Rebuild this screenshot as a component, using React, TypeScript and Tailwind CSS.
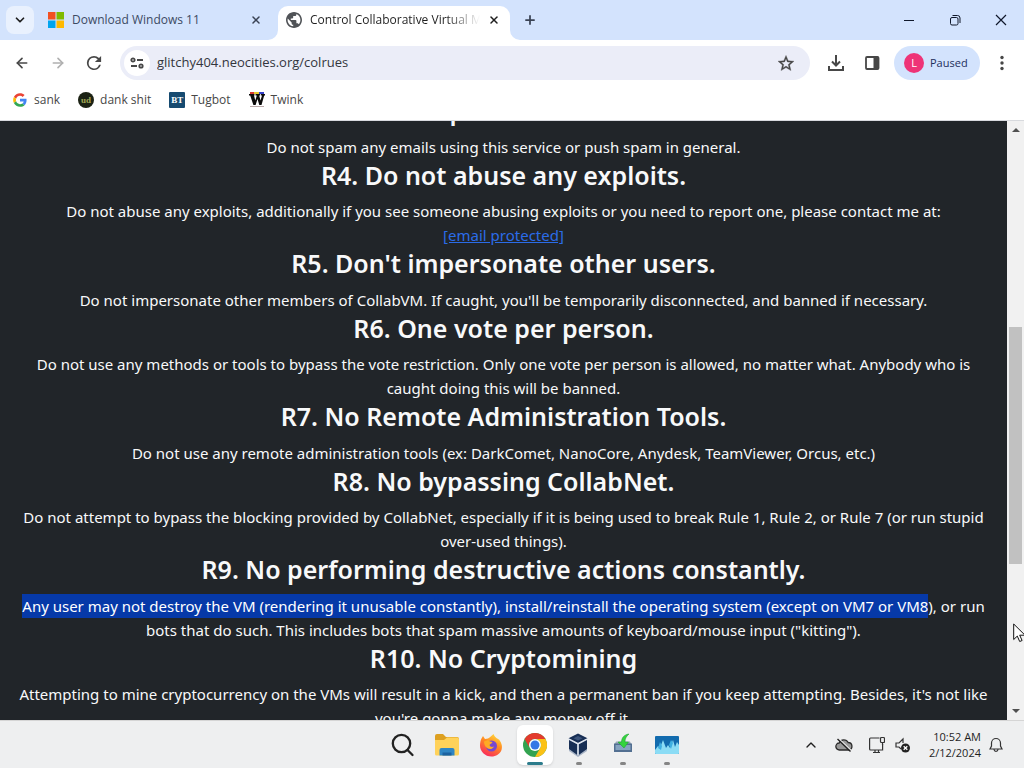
import { ArrowLeft, ArrowRight, Plus, X, ChevronDown, ChevronUp } from "lucide-react";
import type { ReactNode } from "react";

type Rule = { title: string; body: ReactNode };

const rules: Rule[] = [
  { title: "R3. Spam & emails", body: "Do not spam any emails using this service or push spam in general." },
  {
    title: "R4. Do not abuse any exploits.",
    body: (
      <>
        Do not abuse any exploits, additionally if you see someone abusing exploits or you need to report one, please contact me at:
        <br />
        <a href="#email" className="text-[#2b6ce8] underline">[email protected]</a>
      </>
    ),
  },
  {
    title: "R5. Don't impersonate other users.",
    body: "Do not impersonate other members of CollabVM. If caught, you'll be temporarily disconnected, and banned if necessary.",
  },
  {
    title: "R6. One vote per person.",
    body: (
      <>
        Do not use any methods or tools to bypass the vote restriction. Only one vote per person is allowed, no matter what. Anybody who is
        <br />
        caught doing this will be banned.
      </>
    ),
  },
  {
    title: "R7. No Remote Administration Tools.",
    body: "Do not use any remote administration tools (ex: DarkComet, NanoCore, Anydesk, TeamViewer, Orcus, etc.)",
  },
  {
    title: "R8. No bypassing CollabNet.",
    body: (
      <>
        Do not attempt to bypass the blocking provided by CollabNet, especially if it is being used to break Rule 1, Rule 2, or Rule 7 (or run stupid
        <br />
        over-used things).
      </>
    ),
  },
  {
    title: "R9. No performing destructive actions constantly.",
    body: (
      <>
        <mark className="inline-block bg-[#0639a8] text-white">
          Any user may not destroy the VM (rendering it unusable constantly), install/reinstall the operating system (except on VM7 or VM8
        </mark>
        ), or run
        <br />
        bots that do such. This includes bots that spam massive amounts of keyboard/mouse input ("kitting").
      </>
    ),
  },
  {
    title: "R10. No Cryptomining",
    body: (
      <>
        Attempting to mine cryptocurrency on the VMs will result in a kick, and then a permanent ban if you keep attempting. Besides, it's not like
        <br />
        you're gonna make any money off it.
      </>
    ),
  },
];

function MicrosoftLogo() {
  return (
    <svg className="size-4 shrink-0" viewBox="0 0 16 16" aria-hidden="true">
      <path fill="#f25022" d="M0 0h7.5v7.5H0z" />
      <path fill="#7fba00" d="M8.5 0H16v7.5H8.5z" />
      <path fill="#00a4ef" d="M0 8.500h7.500V16H0z" />
      <path fill="#ffb900" d="M8.500 8.500H16V16H8.500z" />
    </svg>
  );
}

function Globe() {
  return (
    <svg className="size-4 shrink-0" viewBox="2 2 20 20" aria-hidden="true">
      <path
        fill="#505357"
        d="M12 2C6.480 2 2 6.480 2 12s4.480 10 10 10 10-4.480 10-10S17.520 2 12 2zm-1 17.930c-3.950-.49-7-3.850-7-7.930 0-.62.08-1.210.21-1.790L9 15v1c0 1.100.9 2 2 2v1.930zm6.900-2.540c-.26-.81-1-1.390-1.900-1.390h-1v-3c0-.55-.45-1-1-1H8v-2h2c.55 0 1-.45 1-1V7h2c1.100 0 2-.9 2-2v-.41c2.930 1.190 5 4.060 5 7.410 0 2.080-.8 3.970-2.100 5.390z"
      />
    </svg>
  );
}

function TabStrip() {
  return (
    <header className="flex h-10 shrink-0 items-stretch bg-[#d3e3fd]">
      <button aria-label="Search tabs" className="ml-1.5 mt-1.5 grid size-7 place-items-center rounded-lg bg-[#e9f1fe]">
        <ChevronDown className="size-3.5 text-[#1f1f1f]" strokeWidth={3} />
      </button>
      <div className="flex w-[244px] items-center pr-4">
        <div className="flex grow items-center gap-2 pl-3.5">
          <MicrosoftLogo />
          <span className="text-[12px] text-[#3c4a63]">Download Windows 11</span>
        </div>
        <button aria-label="Close tab" className="text-[#3a4354]">
          <X className="size-3" strokeWidth={3} />
        </button>
      </div>
      <div className="relative mt-1.5 flex w-[232px] items-center gap-2 rounded-t-[10px] bg-white pb-1.5 pl-2 pr-2.5">
        <svg className="absolute -left-2.5 bottom-0 size-2.5" viewBox="0 0 10 10" aria-hidden="true">
          <path fill="#fff" d="M10 0v10H0A10 10 0 0 0 10 0z" />
        </svg>
        <svg className="absolute -right-2.5 bottom-0 size-2.5" viewBox="0 0 10 10" aria-hidden="true">
          <path fill="#fff" d="M0 0v10h10A10 10 0 0 1 0 0z" />
        </svg>
        <Globe />
        <span className="min-w-0 grow overflow-hidden whitespace-nowrap bg-linear-to-r from-[#1f1f1f] from-80% to-transparent bg-clip-text text-[12px] text-transparent">
          Control Collaborative Virtual Machines
        </span>
        <button aria-label="Close tab" className="text-[#1f1f1f]">
          <X className="size-3" strokeWidth={3} />
        </button>
      </div>
      <button aria-label="New tab" className="ml-3 grid w-4 place-items-center text-[#3a4354]">
        <Plus className="size-3.5" strokeWidth={3} />
      </button>
      <div className="ml-auto flex items-center text-[#10182b]">
        <button aria-label="Minimize" className="grid w-[46px] place-items-center">
          <svg className="size-3" viewBox="0 0 12 12" fill="none" stroke="currentColor" aria-hidden="true">
            <path d="M1 6.500h10" />
          </svg>
        </button>
        <button aria-label="Restore" className="grid w-[46px] place-items-center">
          <svg className="size-3" viewBox="0 0 12 12" fill="none" stroke="currentColor" aria-hidden="true">
            <rect x="1.500" y="3.500" width="7.500" height="7.500" rx="1.500" />
            <path d="M3.500 1.500H8.500a2.500 2.500 0 0 1 2.500 2.500v5" />
          </svg>
        </button>
        <button aria-label="Close" className="grid w-[46px] place-items-center">
          <svg className="size-3" viewBox="0 0 12 12" fill="none" stroke="currentColor" strokeWidth="1.200" aria-hidden="true">
            <path d="M1 1l10 10M11 1L1 11" />
          </svg>
        </button>
      </div>
    </header>
  );
}

function Toolbar() {
  return (
    <div className="flex h-[46px] shrink-0 items-center bg-white pl-3.5 pr-3.5 text-[#474747]">
      <button aria-label="Back">
        <ArrowLeft className="size-4" strokeWidth={2.5} />
      </button>
      <button aria-label="Forward" className="ml-5 text-[#b0b0b0]">
        <ArrowRight className="size-4" strokeWidth={2.5} />
      </button>
      <button aria-label="Reload" className="ml-5">
        <svg className="size-4" viewBox="3 3 18 18" aria-hidden="true">
          <path
            fill="currentColor"
            d="M17.650 6.350A7.960 7.960 0 0 0 12 4a8 8 0 1 0 7.730 10h-2.080A6 6 0 1 1 12 6c1.660 0 3.140.69 4.220 1.780L13 11h7V4z"
          />
        </svg>
      </button>
      <div className="ml-[18px] flex h-[34px] grow items-center rounded-full bg-[#ebedf8] pl-1 pr-4">
        <button aria-label="View site information" className="grid size-[26px] place-items-center rounded-full bg-white">
          <svg className="size-3.5" viewBox="0 0 14 14" fill="none" stroke="currentColor" strokeWidth="1.800" aria-hidden="true">
            <circle cx="3" cy="4" r="1.700" />
            <path d="M7 4h6M1 10h6" />
            <circle cx="11" cy="10" r="1.700" />
          </svg>
        </button>
        <input
          aria-label="Address"
          defaultValue="glitchy404.neocities.org/colrues"
          className="ml-[7px] min-w-0 grow bg-transparent text-[13px] text-[#33363d] outline-none"
        />
        <button aria-label="Bookmark this tab">
          <svg className="size-4" viewBox="2 2 20 19" aria-hidden="true">
            <path
              fill="currentColor"
              stroke="currentColor"
              strokeWidth=".4"
              d="M22 9.240l-7.190-.62L12 2 9.190 8.630 2 9.240l5.460 4.730L5.820 21 12 17.270 18.180 21l-1.630-7.030L22 9.240zM12 15.400l-3.760 2.270 1-4.280-3.320-2.880 4.380-.38L12 6.100l1.710 4.040 4.380.38-3.320 2.880 1 4.280L12 15.400z"
            />
          </svg>
        </button>
      </div>
      <button aria-label="Downloads" className="ml-[18px]">
        <svg className="size-4" viewBox="0 0 16 16" fill="none" stroke="currentColor" strokeWidth="2" aria-hidden="true">
          <path d="M8 0v10M4 6.500l4 4 4-4M1 11v4h14v-4" />
        </svg>
      </button>
      <button aria-label="Side panel" className="ml-5">
        <svg className="size-4" viewBox="0 0 16 16" aria-hidden="true">
          <rect x="2" y="2" width="12.500" height="12" rx="1" fill="none" stroke="currentColor" strokeWidth="1.800" />
          <path fill="currentColor" d="M9.500 1.500H14V14H9.500z" />
        </svg>
      </button>
      <button className="ml-3.5 flex h-[34px] w-[86px] items-center gap-1.5 rounded-full bg-[#d3e3fd] pl-2.5 text-[11px] text-[#1d2f5c]">
        <span className="grid size-5 place-items-center rounded-full bg-[#ee3377] text-[11px] text-white">L</span>
        Paused
      </button>
      <button aria-label="Menu" className="ml-3.5">
        <svg className="size-4" viewBox="0 0 16 16" fill="currentColor" aria-hidden="true">
          <circle cx="8" cy="2.500" r="1.700" />
          <circle cx="8" cy="8" r="1.700" />
          <circle cx="8" cy="13.500" r="1.700" />
        </svg>
      </button>
    </div>
  );
}

function BookmarkBar() {
  return (
    <nav className="flex h-[35px] shrink-0 items-start gap-[18px] border-b border-[#d8dade] bg-white pl-3 pt-1 text-[12px] leading-5 text-[#474747]">
      <a href="#sank" className="flex items-center gap-1.5">
        <svg className="size-4" viewBox="-4 -4 56 56" aria-hidden="true">
          <path fill="#EA4335" d="M24 9.500c3.540 0 6.710 1.220 9.210 3.600l6.850-6.850C35.900 2.380 30.470 0 24 0 14.620 0 6.510 5.380 2.560 13.220l7.980 6.190C12.430 13.720 17.740 9.500 24 9.500z" />
          <path fill="#4285F4" d="M46.980 24.550c0-1.570-.15-3.090-.38-4.550H24v9.020h12.940c-.58 2.960-2.260 5.480-4.780 7.180l7.730 6c4.510-4.180 7.090-10.360 7.090-17.650z" />
          <path fill="#FBBC05" d="M10.530 28.590A14.500 14.500 0 0 1 9.770 24c0-1.600.27-3.140.76-4.590l-7.980-6.190A23.900 23.900 0 0 0 0 24c0 3.880.92 7.540 2.560 10.780l7.970-6.190z" />
          <path fill="#34A853" d="M24 48c6.480 0 11.930-2.130 15.890-5.810l-7.730-6c-2.150 1.450-4.920 2.300-8.160 2.300-6.260 0-11.570-4.220-13.470-9.910l-7.980 6.190C6.510 42.620 14.620 48 24 48z" />
        </svg>
        sank
      </a>
      <a href="#dank" className="flex items-center gap-1.5">
        <span className="grid size-4 place-items-center rounded-full bg-[#1b2214] font-['Liberation_Serif',serif] text-[9px] font-bold leading-none text-[#a3a856]">ud</span>
        dank shit
      </a>
      <a href="#tugbot" className="flex items-center gap-1.5">
        <span className="grid size-4 place-items-center rounded-[1px] bg-[#164a70] font-['Liberation_Serif',serif] text-[9px] font-bold leading-none text-white">BT</span>
        Tugbot
      </a>
      <a href="#twink" className="flex items-center gap-1.5">
        <svg className="size-4" viewBox="0 0 16 16" aria-hidden="true">
          <path fill="#d6372f" d="M1 0h4v2H1z" />
          <path fill="#e8c82e" d="M5 0h5v2H5z" />
          <path fill="#3440c8" d="M10 0h5v2h-5z" />
          <path fill="#0b0b0b" d="M0 2h5.500v1.500H5L6.300 8.500 7.800 3.500H6.500V2H11v1.500h-.8L11.500 8.500 13 3.500h-1.200V2H16v1.500h-.8L12.500 13h-2.200L8.500 7 6.600 13H4.400L1.200 3.500H0z" />
          <path stroke="#b9a9a9" d="M1 14.500h14" />
        </svg>
        Twink
      </a>
    </nav>
  );
}

function Page() {
  return (
    <div className="flex min-h-0 grow bg-[#212529] font-['Noto_Sans','Open_Sans',sans-serif]">
      <main className="min-w-0 grow overflow-hidden text-center text-[#f8f9fa]">
        <div className="-mt-[27px] whitespace-nowrap">
          {rules.map((rule) => (
            <section key={rule.title}>
              <h3 className="mb-2 text-[25px] font-semibold leading-[1.3]">{rule.title}</h3>
              <div className="flex justify-center text-[15px] leading-6">
                <p>{rule.body}</p>
              </div>
            </section>
          ))}
        </div>
      </main>
      <div className="relative flex w-[17px] shrink-0 flex-col items-center bg-[#f1f1f1] py-[7px]">
        <svg className="h-1 w-2" viewBox="0 0 8 4" aria-hidden="true">
          <path fill="#505050" d="M0 4l4-4 4 4z" />
        </svg>
        <div className="flex w-[13px] grow flex-col">
          <div className="grow-[195]" />
          <div className="grow-[237] bg-[#c1c1c1]" />
          <div className="grow-[145]" />
        </div>
        <svg className="h-1 w-2" viewBox="0 0 8 4" aria-hidden="true">
          <path fill="#505050" d="M0 0l4 4 4-4z" />
        </svg>
        <svg className="absolute left-1.5 top-[502px] h-5 w-3" viewBox="0 0 12 20" aria-hidden="true">
          <path fill="#fff" stroke="#111" d="M.7 1v15.500l3.600-3.400 2.400 5.400 2.400-1-2.400-5.300H12z" />
        </svg>
      </div>
    </div>
  );
}

function TaskItem({ label, children, state }: { label: string; children: ReactNode; state?: "active" | "open" }) {
  return (
    <button
      aria-label={label}
      className={
        state === "active"
          ? "relative grid h-10 w-9 place-items-center rounded-md bg-white shadow-sm"
          : "relative grid h-10 w-9 place-items-center"
      }
    >
      {children}
      {state === "active" && <span className="absolute bottom-0 left-2.5 h-[3px] w-4 rounded-full bg-[#2c7c8c]" />}
      {state === "open" && <span className="absolute bottom-0 left-[15px] h-[3px] w-1.5 rounded-full bg-[#858585]" />}
    </button>
  );
}

function Taskbar() {
  return (
    <footer className="relative flex h-12 shrink-0 items-center justify-end border-t border-[#d5d5d5] bg-[#eeeff0] text-[#1f1f1f]">
      <div className="absolute inset-y-0 left-[385px] flex items-center gap-2">
        <TaskItem label="Search">
          <svg className="size-6" viewBox="0 0 24 24" fill="none" stroke="#222" strokeWidth="2.300" aria-hidden="true">
            <circle cx="10.500" cy="10.500" r="8.700" />
            <path strokeLinecap="round" d="M16.500 17l5 5" />
          </svg>
        </TaskItem>
        <TaskItem label="File Explorer">
          <svg className="size-6" viewBox="0 0 24 24" aria-hidden="true">
            <path fill="#dda021" d="M0 3q0-2 2-2h6l3 3h11q2 0 2 2v7H0z" />
            <path fill="#ffd25a" d="M0 7h9l3-2.500h10q2 0 2 2V21q0 1.500-1.500 1.500h-21Q0 22.500 0 21z" />
            <path fill="#2f86c4" d="M4.500 22.500V17q0-2 2-2h11q2 0 2 2v5.500z" />
            <path fill="#1c62a0" d="M7.500 19.500h9v3h-9z" />
          </svg>
        </TaskItem>
        <TaskItem label="Firefox">
          <svg className="size-6" viewBox="0 0 24 24" aria-hidden="true">
            <defs>
              <linearGradient id="fox" x1=".8" y1="0" x2=".3" y2="1">
                <stop offset="0" stopColor="#ffe13f" />
                <stop offset=".45" stopColor="#ff8a22" />
                <stop offset="1" stopColor="#f9285f" />
              </linearGradient>
            </defs>
            <path fill="url(#fox)" d="M2.500 5.500L4 3l2 3 3-.5C12 4 13 2 14.500 1c.5 2 2 3 3.500 4.500 1 .5 2 1 2 1 3 4 3.500 7 2.500 10.500C21 21 17 23.500 12.500 23.500 6 23.500 1 18.500 1 12.500 1 10 1.500 7.500 2.500 5.500z" />
            <circle cx="12.500" cy="13" r="5.500" fill="#7747cf" />
            <path fill="#ffab24" d="M5 8.500l4-1.500 2 1.500 2.500.5c-.5 1.500-2.500 2-3 3 .5 2 2.500 2.500 4.500 1.500-1 2.500-4.500 3.500-7 1.500-2-1.500-3-4-3-6.500z" />
          </svg>
        </TaskItem>
        <TaskItem label="Chrome" state="active">
          <svg className="size-6" viewBox="0 0 24 24" aria-hidden="true">
            <circle cx="12" cy="12" r="12" fill="#33a350" />
            <path fill="#e33b2e" d="M1.600 6A12 12 0 0 1 22.400 6H12a6 6 0 0 0-5.200 9z" />
            <path fill="#fbc116" d="M22.400 6A12 12 0 0 1 12 24l5.200-9A6 6 0 0 0 12 6z" />
            <circle cx="12" cy="12" r="6" fill="#fff" />
            <circle cx="12" cy="12" r="4.500" fill="#3478e5" />
          </svg>
        </TaskItem>
        <TaskItem label="VirtualBox" state="open">
          <svg className="size-6" viewBox="0 0 24 24" aria-hidden="true">
            <path fill="#a7b3c5" d="M2 6l9 4 9-4v12l-9 6-9-6z" />
            <path fill="#182f55" d="M11 .5l9.500 4.800L11 10 1.500 5.300z" />
            <path fill="#3c547c" d="M11 3l4.500 2.300L11 7.600 6.500 5.300z" />
            <path fill="#182f55" d="M2 7l8.300 4.300V22L2 16zM20 7l-8.300 4.300V22L20 16z" />
            <path fill="#dfe6f0" d="M1.500 5.300L11 10l9.500-4.700v1.300l-8.800 4.600V22h-1.400V11.200L1.500 6.600z" />
          </svg>
        </TaskItem>
        <TaskItem label="Installer" state="open">
          <svg className="size-6" viewBox="0 0 24 24" aria-hidden="true">
            <path fill="#9aa9b8" d="M5 8.500h14l2 4H3z" />
            <path fill="#526f91" d="M3 10.500h18V19H3z" />
            <path fill="#86a3c0" d="M4.500 12h15v5h-15z" />
            <path fill="#35d33d" stroke="#1b9c32" strokeWidth=".5" d="M18 1c-5 .5-7.500 4-7.500 8H7l6 6 4.500-6H14c0-3 1-5.500 4-8z" />
          </svg>
        </TaskItem>
        <TaskItem label="System monitor" state="open">
          <svg className="size-6" viewBox="0 0 24 24" aria-hidden="true">
            <rect y="3" width="24" height="18" rx="1" fill="#126bae" />
            <path fill="#8bdcf5" d="M0 17l3-4 2 2 3-8 3 8 2-3 2 3 3-8 2 7 2-5 2 3v8q0 1-1 1H1q-1 0-1-1z" />
            <path fill="#3eafe1" d="M3 15l2-6 2 4-1 4zM14 12l2-5 2 3-2 6z" />
          </svg>
        </TaskItem>
      </div>
      <button aria-label="Show hidden icons" className="mr-4">
        <ChevronUp className="size-4" />
      </button>
      <svg className="mr-4 h-4 w-[18px]" viewBox="0 0 18 16" role="img" aria-label="OneDrive">
        <path fill="#999" stroke="#2b2b2b" strokeWidth="1.300" d="M4.500 13a3.500 3.500 0 0 1-.3-7 5 5 0 0 1 9-.5A3.800 3.800 0 0 1 14 13z" />
        <path stroke="#eee" strokeWidth="1.300" d="M3.500 1.500l13 12.200" />
        <path stroke="#222" strokeWidth="1.400" d="M2.500 2l13 12.500" />
      </svg>
      <svg className="mr-2.5 h-[18px] w-4" viewBox="0 0 16 18" fill="none" stroke="#333" strokeWidth="1.200" role="img" aria-label="Network">
        <path d="M10.500 2H1.500Q.6 2 .6 3v10q0 1 1 1h12V8M4 16.500h7M6 14v2.500M9.500 14v2.500" />
        <rect x="11.500" y="1.500" width="4" height="5" rx="1" />
        <path d="M13.500 6.500V9" />
      </svg>
      <svg className="mr-[18px] size-4" viewBox="0 0 16 16" role="img" aria-label="Volume muted">
        <path fill="none" stroke="#333" strokeWidth="1.200" d="M6 12L4 10H1V6h3l4-4v4" />
        <circle cx="10.500" cy="11" r="4.500" fill="#222" />
        <path stroke="#fff" strokeWidth="1.300" d="M8.700 9.200l3.600 3.600M12.300 9.200l-3.600 3.600" />
      </svg>
      <div className="text-right text-[11px] leading-4">
        <div>10:52 AM</div>
        <div>2/12/2024</div>
      </div>
      <button aria-label="Notifications" className="ml-2 mr-[21px]">
        <svg className="h-4 w-3.5" viewBox="0 0 14 16" fill="none" stroke="#333" strokeWidth="1.200" aria-hidden="true">
          <path d="M1 12l1.500-3V6a4.500 4.500 0 0 1 9 0v3l1.500 3zM5 12.500c.3 2.500 3.700 2.500 4 0" />
        </svg>
      </button>
    </footer>
  );
}

export default function App() {
  return (
    <div className="flex h-screen flex-col overflow-hidden bg-white font-['Open_Sans','Noto_Sans',sans-serif]">
      <TabStrip />
      <Toolbar />
      <BookmarkBar />
      <Page />
      <Taskbar />
    </div>
  );
}
